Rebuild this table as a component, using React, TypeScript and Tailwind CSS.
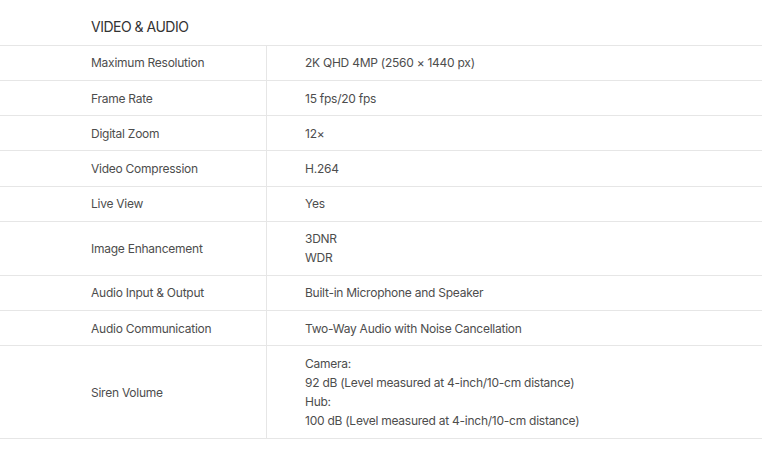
import React from 'react';

const rows: { label: string; value: string[] }[] = [
  { label: 'Maximum Resolution', value: ['2K QHD 4MP (2560 × 1440 px)'] },
  { label: 'Frame Rate', value: ['15 fps/20 fps'] },
  { label: 'Digital Zoom', value: ['12×'] },
  { label: 'Video Compression', value: ['H.264'] },
  { label: 'Live View', value: ['Yes'] },
  { label: 'Image Enhancement', value: ['3DNR', 'WDR'] },
  { label: 'Audio Input & Output', value: ['Built-in Microphone and Speaker'] },
  { label: 'Audio Communication', value: ['Two-Way Audio with Noise Cancellation'] },
  {
    label: 'Siren Volume',
    value: [
      'Camera:',
      '92 dB (Level measured at 4-inch/10-cm distance)',
      'Hub:',
      '100 dB (Level measured at 4-inch/10-cm distance)',
    ],
  },
];

export default function App() {
  return (
    <div className="w-[762px] h-[463px] bg-white font-['Inter',sans-serif] text-[#4d4d4d]">
      {/* Section title */}
      <div className="h-[46px] pt-[17px] pl-[91px] text-[14px] leading-[20px] tracking-[-0.5px] text-[#333] border-b border-[#e6e6e6]">
        VIDEO &amp; AUDIO
      </div>

      {/* Spec rows */}
      {rows.map((row) => (
        <div key={row.label} className="flex border-b border-[#e6e6e6] text-[12px] leading-[19.25px] tracking-[-0.25px]">
          <div className="w-[267px] shrink-0 flex items-center pl-[91px] border-r border-[#e6e6e6]">
            {row.label}
          </div>
          <div className="pl-[38px] py-[7.45px]">
            {row.value.map((v, i) => (
              <div key={i}>{v}</div>
            ))}
          </div>
        </div>
      ))}
    </div>
  );
}
